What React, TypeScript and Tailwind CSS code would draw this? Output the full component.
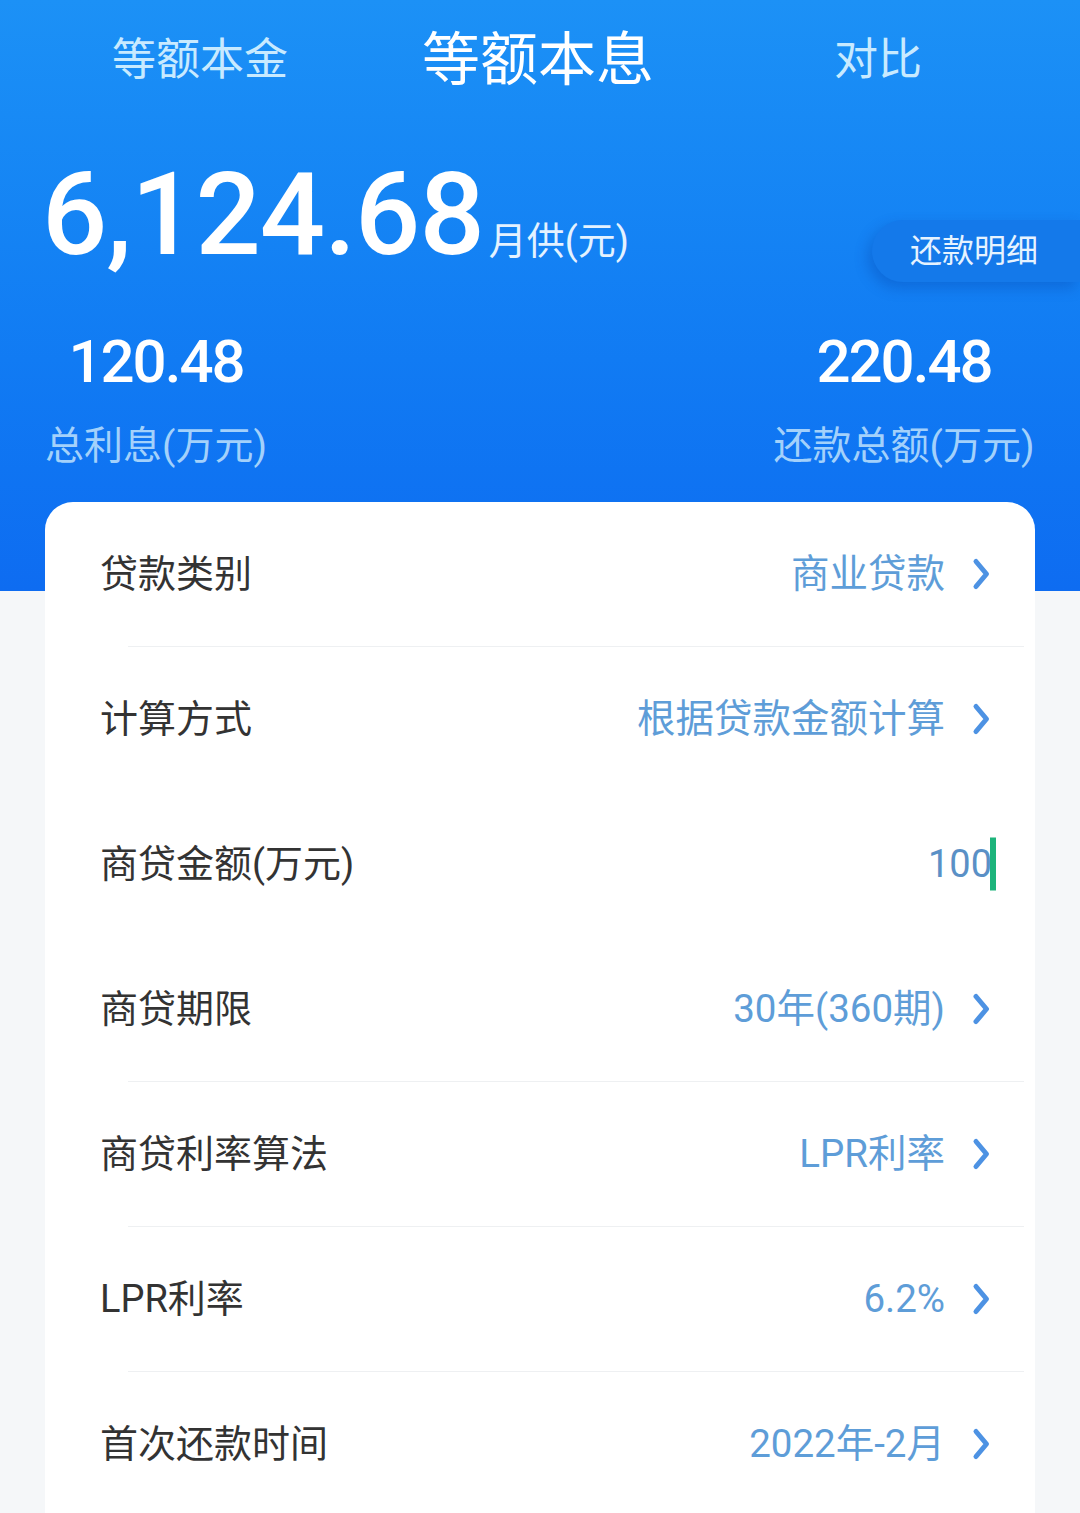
import React from "react";

const font = { fontFamily: "Roboto, 'Noto Sans CJK SC', sans-serif" };

function Chevron() {
  return (
    <svg width="22" height="34" viewBox="0 0 22 34" className="ml-[25px] shrink-0">
      <path d="M6 4.5 L16.5 17 L6 29.5" fill="none" stroke="#4d92e3" strokeWidth="5" strokeLinecap="round" strokeLinejoin="round" />
    </svg>
  );
}

type Row = { label: string; value: string; chevron: boolean; divider: boolean; cursor?: boolean };

const rows: Row[] = [
  { label: "贷款类别", value: "商业贷款", chevron: true, divider: true },
  { label: "计算方式", value: "根据贷款金额计算", chevron: true, divider: false },
  { label: "商贷金额(万元)", value: "100", chevron: false, divider: false, cursor: true },
  { label: "商贷期限", value: "30年(360期)", chevron: true, divider: true },
  { label: "商贷利率算法", value: "LPR利率", chevron: true, divider: true },
  { label: "LPR利率", value: "6.2%", chevron: true, divider: true },
  { label: "首次还款时间", value: "2022年-2月", chevron: true, divider: false },
];

export default function App() {
  return (
    <div className="relative w-[1080px] h-[1513px] overflow-hidden bg-[#f5f7f9]" style={font}>
      <div className="h-[591px] bg-gradient-to-b from-[#1c91f6] to-[#0e6cf1]">
        <div className="flex h-[120px] items-center">
          <div className="flex w-[400px] justify-center text-[44px] leading-none text-[#c8eaff]">等额本金</div>
          <div className="flex w-[276px] justify-center text-[58px] leading-none text-white">等额本息</div>
          <div className="flex flex-1 justify-center text-[44px] leading-none text-[#c8eaff]">对比</div>
        </div>
        <div className="mt-[37px] flex items-start justify-between">
          <div className="flex items-baseline pl-[42px]">
            <span className="text-[115px] leading-none font-medium text-white tracking-[-1px]">6,124.68</span>
            <span className="ml-[5px] text-[38px] leading-none text-[#e4f2ff]">月供(元)</span>
          </div>
          <div className="mt-[63px] flex h-[62px] items-center rounded-l-full bg-[#1479ea] pl-[38px] pr-[42px] text-[32px] leading-none text-[#e6f3ff] shadow-[-4px_6px_14px_rgba(0,50,150,0.28)]">
            还款明细
          </div>
        </div>
        <div className="mt-[50px] flex justify-between">
          <div className="flex w-[312px] flex-col items-center">
            <span className="text-[60px] leading-none font-medium text-white tracking-[-2px]">120.48</span>
            <span className="mt-[35px] text-[39px] leading-none text-[#a3d1fb]">总利息(万元)</span>
          </div>
          <div className="flex w-[352px] flex-col items-center">
            <span className="text-[60px] leading-none font-medium text-white tracking-[-2px]">220.48</span>
            <span className="mt-[35px] text-[39px] leading-none text-[#a3d1fb]">还款总额(万元)</span>
          </div>
        </div>
      </div>
      <div className="relative -mt-[89px] px-[45px]">
        <div className="rounded-t-[28px] bg-white">
          {rows.map((r) => (
            <div key={r.label} className="flex h-[145px] flex-col">
              <div className="flex flex-1 items-center justify-between pl-[55px] pr-[43px]">
                <span className="text-[38px] leading-none text-[#333333]">{r.label}</span>
                <div className="flex items-center">
                  {r.cursor ? (
                    <div className="relative flex items-center">
                      <span className="text-[38px] leading-none text-[#5a90c6]">100</span>
                      <span className="absolute right-[-4px] top-1/2 h-[53px] w-[6px] -translate-y-1/2 bg-[#1db47b]" />
                    </div>
                  ) : (
                    <span className="text-[38.5px] leading-none text-[#5e9dd8]">{r.value}</span>
                  )}
                  {r.chevron && <Chevron />}
                </div>
              </div>
              <div className={`ml-[83px] mr-[11px] h-px ${r.divider ? "bg-[#eef0f2]" : "bg-transparent"}`} />
            </div>
          ))}
        </div>
      </div>
    </div>
  );
}
